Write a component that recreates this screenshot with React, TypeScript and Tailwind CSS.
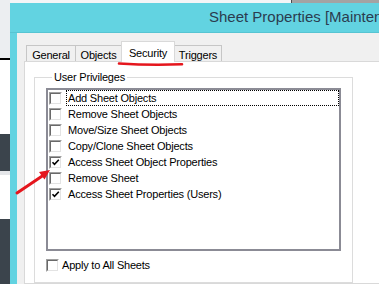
import type { ReactNode } from 'react'

const PRIVILEGES = [
  { label: 'Add Sheet Objects', checked: false, focused: true },
  { label: 'Remove Sheet Objects', checked: false },
  { label: 'Move/Size Sheet Objects', checked: false },
  { label: 'Copy/Clone Sheet Objects', checked: false },
  { label: 'Access Sheet Object Properties', checked: true },
  { label: 'Remove Sheet', checked: false },
  { label: 'Access Sheet Properties (Users)', checked: true },
]

const TABS = [
  { label: 'General', width: 'w-[50px]' },
  { label: 'Objects', width: 'w-[47px]' },
  { label: 'Security', width: 'w-[54px]', active: true },
  { label: 'Triggers', width: 'w-[48px]' },
]

function CheckBox({ checked }: { checked?: boolean }) {
  return (
    <span className="w-[13px] h-[13px] shrink-0 flex border-t border-l border-[#a0a0a0] border-r border-b border-r-white border-b-white">
      <span className="flex-1 flex items-center justify-center bg-white border-t border-l border-[#696969] border-r border-b border-r-[#e3e3e3] border-b-[#e3e3e3]">
        {checked && (
          <svg width="9" height="9" viewBox="0 0 9 9">
            <path d="M1.5 4.2 L3.5 6.3 L7.8 1.8" fill="none" stroke="#000" strokeWidth="1.6" />
          </svg>
        )}
      </span>
    </span>
  )
}

function Tab({ label, width, active }: { label: string; width: string; active?: boolean }) {
  if (active) {
    return (
      <div
        className={`${width} h-[21px] -ml-px -mb-px relative z-10 bg-white border-t border-l border-r border-[#d9d9d9] flex justify-center pt-[3px]`}
      >
        {label}
      </div>
    )
  }
  return (
    <div
      className={`${width} h-[16px] -ml-px first:ml-0 bg-[#f0f0f0] border-t border-l border-r border-[#c6c6c6] flex justify-center pt-[1px]`}
    >
      {label}
    </div>
  )
}

function Row({ children, checked, focused }: { children: ReactNode; checked?: boolean; focused?: boolean }) {
  return (
    <div className="h-[16px] flex items-center">
      <span className="ml-[1px]">
        <CheckBox checked={checked} />
      </span>
      <span
        className={`ml-[4px] flex-1 h-[16px] flex items-center pl-[1px] border border-dotted ${
          focused ? 'border-black' : 'border-transparent'
        }`}
      >
        {children}
      </span>
    </div>
  )
}

export default function App() {
  return (
    <div className="relative w-[379px] h-[284px] overflow-hidden flex bg-[#eceef1] font-['Liberation_Sans',Arial,sans-serif] text-[11px] tracking-[-0.2px] text-black">
      {/* desktop behind the dialog */}
      <div className="w-[10px] shrink-0 flex flex-col">
        <div className="h-[58px] bg-[#eceef1]" />
        <div className="h-[2px] bg-black" />
        <div className="h-[74px] bg-white" />
        <div className="h-[37px] bg-[#3b444c]" />
        <div className="h-[4px] bg-[#e4e6e9]" />
        <div className="h-[44px] bg-white" />
        <div className="flex-1 bg-[#3b444c]" />
      </div>

      <div className="flex-1 min-w-0 flex flex-col">
        <div className="h-[3px] flex shrink-0">
          <div className="w-[281px] bg-[#f4f5f7]" />
          <div className="w-px bg-[#4a4a4a]" />
          <div className="flex-1 bg-[#a3a3a3]" />
        </div>

        {/* dialog window */}
        <div className="flex-1 flex flex-col bg-[#62d3e1] w-[420px]">
          <div className="h-[30px] shrink-0 flex items-center pl-[199px] border-b border-[#56c4d2] text-[15px] tracking-normal text-[#2b3c4f] whitespace-nowrap">
            Sheet Properties [Maintenance]
          </div>

          <div className="flex-1 ml-[7px] bg-[#f0f0f0] pl-[7px] pt-[8px] flex flex-col">
            <div className="flex items-end h-[20px] pl-[2px]">
              {TABS.map((t) => (
                <Tab key={t.label} {...t} />
              ))}
            </div>

            <div className="flex-1 bg-white border border-[#d9d9d9] pl-[9px]">
              <fieldset className="w-[319px] mt-[9px] border border-[#dcdcdc] px-[11px] pb-[10px]">
                <legend className="ml-[6px] px-[2px] leading-[13px]">User Privileges</legend>

                <div className="mt-[4px] h-[163px] border-2 border-[#8b8b95] bg-white">
                  {PRIVILEGES.map((p) => (
                    <Row key={p.label} checked={p.checked} focused={p.focused}>
                      {p.label}
                    </Row>
                  ))}
                </div>

                <div className="mt-[8px] h-[13px] flex items-center gap-[3px]">
                  <CheckBox />
                  <span>Apply to All Sheets</span>
                </div>
              </fieldset>
            </div>
          </div>
        </div>
      </div>

      {/* red annotations */}
      <svg className="absolute inset-0 pointer-events-none" width="379" height="284" viewBox="0 0 379 284">
        <path d="M119 63.5 Q150 65.5 182 64.3" fill="none" stroke="#e5161d" strokeWidth="2.6" strokeLinecap="round" />
        <line x1="17" y1="193" x2="43" y2="175.5" stroke="#e5161d" strokeWidth="3" strokeLinecap="round" />
        <polygon points="50,170 44.5,179.5 39,172" fill="#e5161d" />
      </svg>
    </div>
  )
}
